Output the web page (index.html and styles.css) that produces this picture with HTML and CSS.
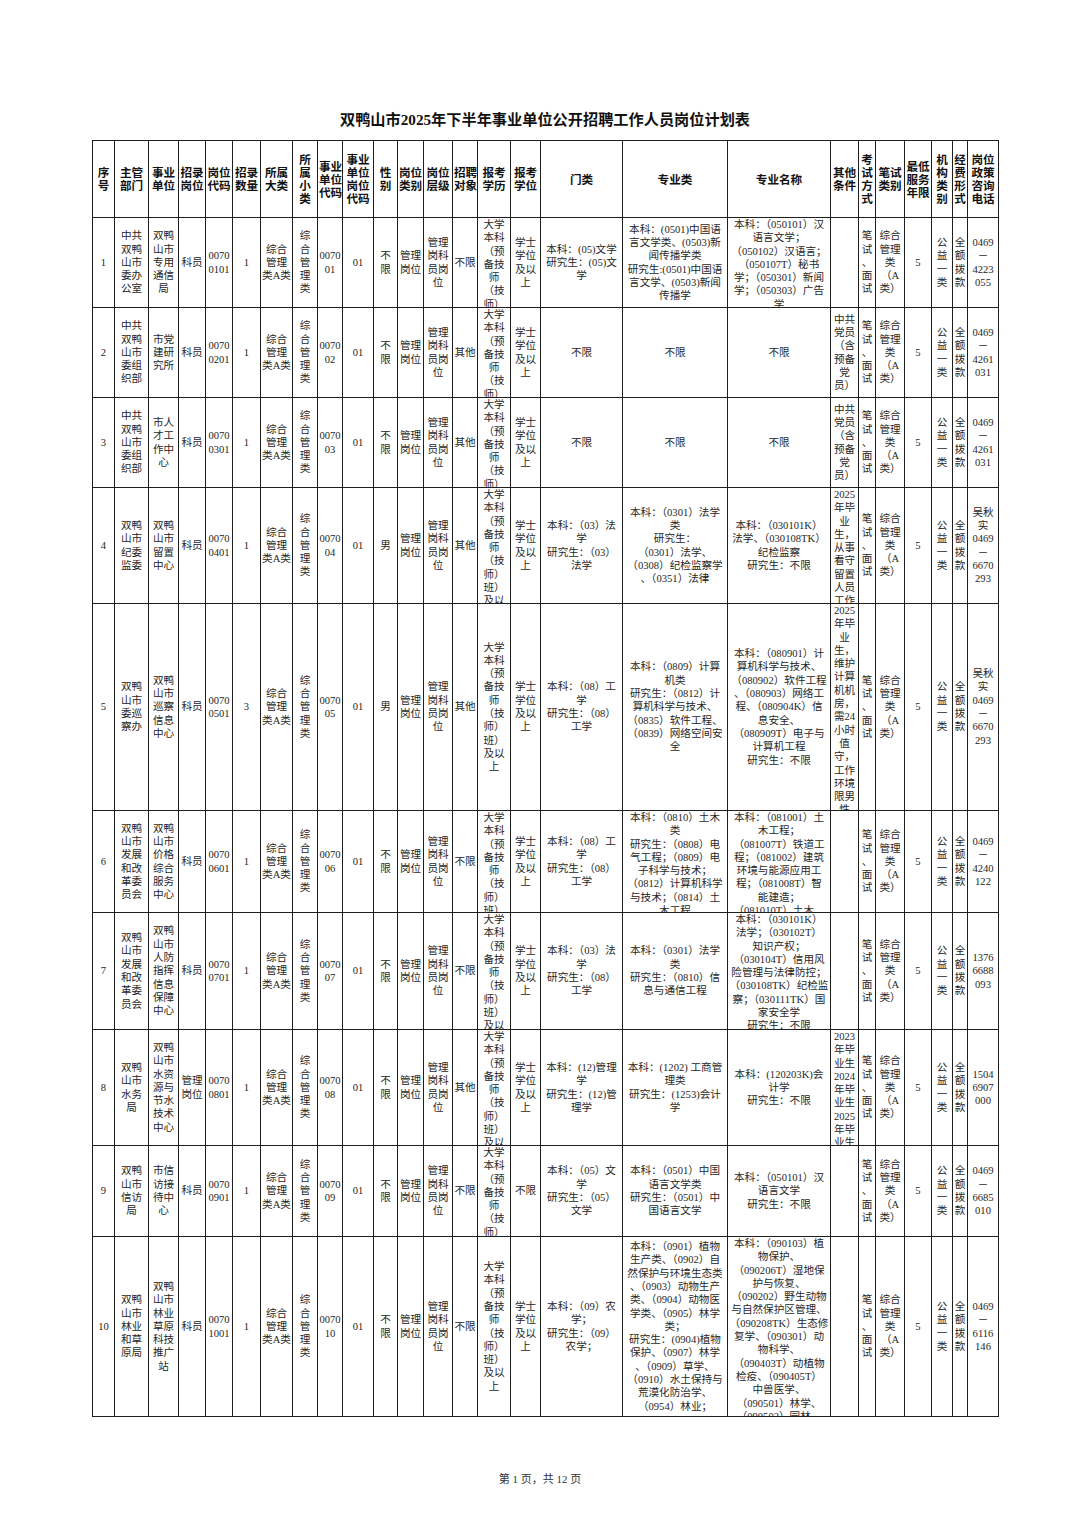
FILE: index.html
```html
<!DOCTYPE html>
<html lang="zh-CN">
<head>
<meta charset="utf-8">
<title>双鸭山市2025年下半年事业单位公开招聘工作人员岗位计划表</title>
<link rel="stylesheet" href="styles.css">
</head>
<body>
<div class="sheet">
<h1 class="title">双鸭山市2025年下半年事业单位公开招聘工作人员岗位计划表</h1>
<table class="plan">
<colgroup>
<col class="c-no"><col class="c-dept"><col class="c-unit"><col class="c-post"><col class="c-code"><col class="c-num"><col class="c-cat"><col class="c-sub"><col class="c-ucode"><col class="c-pcode"><col class="c-sex"><col class="c-ptype"><col class="c-level"><col class="c-target"><col class="c-edu"><col class="c-deg"><col class="c-field"><col class="c-major"><col class="c-mname"><col class="c-other"><col class="c-exam"><col class="c-wtype"><col class="c-years"><col class="c-org"><col class="c-fund"><col class="c-tel">
</colgroup>
<thead>
<tr class="hd">
<th>序<br>号</th><th>主管<br>部门</th><th>事业<br>单位</th><th>招录<br>岗位</th><th>岗位<br>代码</th><th>招录<br>数量</th><th>所属<br>大类</th><th>所<br>属<br>小<br>类</th><th>事业<br>单位<br>代码</th><th>事业<br>单位<br>岗位<br>代码</th><th>性<br>别</th><th>岗位<br>类别</th><th>岗位<br>层级</th><th>招聘<br>对象</th><th>报考<br>学历</th><th>报考<br>学位</th><th>门类</th><th>专业类</th><th>专业名称</th><th>其他<br>条件</th><th>考<br>试<br>方<br>式</th><th>笔试<br>类别</th><th>最低<br>服务<br>年限</th><th>机<br>构<br>类<br>别</th><th>经<br>费<br>形<br>式</th><th>岗位<br>政策<br>咨询<br>电话</th>
</tr>
</thead>
<tbody>
<tr class="r1">
<td>1</td><td>中共<br>双鸭<br>山市<br>委办<br>公室</td><td>双鸭<br>山市<br>专用<br>通信<br>局</td><td>科员</td><td>0070<br>0101</td><td>1</td><td>综合<br>管理<br>类A类</td><td>综<br>合<br>管<br>理<br>类</td><td>0070<br>01</td><td>01</td><td>不<br>限</td><td>管理<br>岗位</td><td>管理<br>岗科<br>员岗<br>位</td><td>不限</td>
<td><div class="clip">大学<br>本科<br>（预<br>备技<br>师<br>（技<br>师）</div></td>
<td>学士<br>学位<br>及以<br>上</td>
<td>本科：(05)文学<br>研究生：(05)文<br>学</td>
<td>本科：(0501)中国语<br>言文学类、(0503)新<br>闻传播学类<br>研究生:(0501)中国语<br>言文学、(0503)新闻<br>传播学</td>
<td><div class="clip">本科：（050101）汉<br>语言文学；<br>（050102）汉语言；<br>（050107T）秘书<br>学；（050301）新闻<br>学；（050303）广告<br>学</div></td>
<td></td><td>笔<br>试<br>、<br>面<br>试</td><td>综合<br>管理<br>类<br>（A<br>类）</td><td>5</td><td>公<br>益<br>一<br>类</td><td>全<br>额<br>拨<br>款</td><td>0469<br>－<br>4223<br>055</td>
</tr>
<tr class="r2">
<td>2</td><td>中共<br>双鸭<br>山市<br>委组<br>织部</td><td>市党<br>建研<br>究所</td><td>科员</td><td>0070<br>0201</td><td>1</td><td>综合<br>管理<br>类A类</td><td>综<br>合<br>管<br>理<br>类</td><td>0070<br>02</td><td>01</td><td>不<br>限</td><td>管理<br>岗位</td><td>管理<br>岗科<br>员岗<br>位</td><td>其他</td>
<td><div class="clip">大学<br>本科<br>（预<br>备技<br>师<br>（技<br>师）</div></td>
<td>学士<br>学位<br>及以<br>上</td>
<td>不限</td><td>不限</td><td>不限</td>
<td>中共<br>党员<br>（含<br>预备<br>党<br>员）</td><td>笔<br>试<br>、<br>面<br>试</td><td>综合<br>管理<br>类<br>（A<br>类）</td><td>5</td><td>公<br>益<br>一<br>类</td><td>全<br>额<br>拨<br>款</td><td>0469<br>－<br>4261<br>031</td>
</tr>
<tr class="r3">
<td>3</td><td>中共<br>双鸭<br>山市<br>委组<br>织部</td><td>市人<br>才工<br>作中<br>心</td><td>科员</td><td>0070<br>0301</td><td>1</td><td>综合<br>管理<br>类A类</td><td>综<br>合<br>管<br>理<br>类</td><td>0070<br>03</td><td>01</td><td>不<br>限</td><td>管理<br>岗位</td><td>管理<br>岗科<br>员岗<br>位</td><td>其他</td>
<td><div class="clip">大学<br>本科<br>（预<br>备技<br>师<br>（技<br>师）</div></td>
<td>学士<br>学位<br>及以<br>上</td>
<td>不限</td><td>不限</td><td>不限</td>
<td>中共<br>党员<br>（含<br>预备<br>党<br>员）</td><td>笔<br>试<br>、<br>面<br>试</td><td>综合<br>管理<br>类<br>（A<br>类）</td><td>5</td><td>公<br>益<br>一<br>类</td><td>全<br>额<br>拨<br>款</td><td>0469<br>－<br>4261<br>031</td>
</tr>
<tr class="r4">
<td>4</td><td>双鸭<br>山市<br>纪委<br>监委</td><td>双鸭<br>山市<br>留置<br>中心</td><td>科员</td><td>0070<br>0401</td><td>1</td><td>综合<br>管理<br>类A类</td><td>综<br>合<br>管<br>理<br>类</td><td>0070<br>04</td><td>01</td><td>男</td><td>管理<br>岗位</td><td>管理<br>岗科<br>员岗<br>位</td><td>其他</td>
<td><div class="clip">大学<br>本科<br>（预<br>备技<br>师<br>（技<br>师）<br>班）<br>及以</div></td>
<td>学士<br>学位<br>及以<br>上</td>
<td>本科：（03）法<br>学<br>研究生：（03）<br>法学</td>
<td>本科：（0301）法学<br>类<br>研究生：<br>（0301）法学、<br>（0308）纪检监察学<br>、（0351）法律</td>
<td>本科：（030101K）<br>法学、（030108TK）<br>纪检监察<br>研究生：不限</td>
<td><div class="clip">2025<br>年毕<br>业<br>生，<br>从事<br>看守<br>留置<br>人员<br>工作</div></td>
<td>笔<br>试<br>、<br>面<br>试</td><td>综合<br>管理<br>类<br>（A<br>类）</td><td>5</td><td>公<br>益<br>一<br>类</td><td>全<br>额<br>拨<br>款</td><td>吴秋<br>实<br>0469<br>－<br>6670<br>293</td>
</tr>
<tr class="r5">
<td>5</td><td>双鸭<br>山市<br>委巡<br>察办</td><td>双鸭<br>山市<br>巡察<br>信息<br>中心</td><td>科员</td><td>0070<br>0501</td><td>3</td><td>综合<br>管理<br>类A类</td><td>综<br>合<br>管<br>理<br>类</td><td>0070<br>05</td><td>01</td><td>男</td><td>管理<br>岗位</td><td>管理<br>岗科<br>员岗<br>位</td><td>其他</td>
<td>大学<br>本科<br>（预<br>备技<br>师<br>（技<br>师）<br>班）<br>及以<br>上</td>
<td>学士<br>学位<br>及以<br>上</td>
<td>本科：（08）工<br>学<br>研究生：（08）<br>工学</td>
<td>本科：（0809）计算<br>机类<br>研究生：（0812）计<br>算机科学与技术、<br>（0835）软件工程、<br>（0839）网络空间安<br>全</td>
<td>本科：（080901）计<br>算机科学与技术、<br>（080902）软件工程<br>、（080903）网络工<br>程、（080904K）信<br>息安全、<br>（080909T）电子与<br>计算机工程<br>研究生：不限</td>
<td><div class="clip">2025<br>年毕<br>业<br>生，<br>维护<br>计算<br>机机<br>房，<br>需24<br>小时<br>值<br>守，<br>工作<br>环境<br>限男<br>性</div></td>
<td>笔<br>试<br>、<br>面<br>试</td><td>综合<br>管理<br>类<br>（A<br>类）</td><td>5</td><td>公<br>益<br>一<br>类</td><td>全<br>额<br>拨<br>款</td><td>吴秋<br>实<br>0469<br>－<br>6670<br>293</td>
</tr>
<tr class="r6">
<td>6</td><td>双鸭<br>山市<br>发展<br>和改<br>革委<br>员会</td><td>双鸭<br>山市<br>价格<br>综合<br>服务<br>中心</td><td>科员</td><td>0070<br>0601</td><td>1</td><td>综合<br>管理<br>类A类</td><td>综<br>合<br>管<br>理<br>类</td><td>0070<br>06</td><td>01</td><td>不<br>限</td><td>管理<br>岗位</td><td>管理<br>岗科<br>员岗<br>位</td><td>不限</td>
<td><div class="clip">大学<br>本科<br>（预<br>备技<br>师<br>（技<br>师）<br>班）</div></td>
<td>学士<br>学位<br>及以<br>上</td>
<td>本科：（08）工<br>学<br>研究生：（08）<br>工学</td>
<td><div class="clip">本科：（0810）土木<br>类<br>研究生：（0808）电<br>气工程；（0809）电<br>子科学与技术；<br>（0812）计算机科学<br>与技术；（0814）土<br>木工程</div></td>
<td><div class="clip">本科：（081001）土<br>木工程；<br>（081007T）铁道工<br>程；（081002）建筑<br>环境与能源应用工<br>程；（081008T）智<br>能建造；<br>（081010T）土木、</div></td>
<td></td><td>笔<br>试<br>、<br>面<br>试</td><td>综合<br>管理<br>类<br>（A<br>类）</td><td>5</td><td>公<br>益<br>一<br>类</td><td>全<br>额<br>拨<br>款</td><td>0469<br>－<br>4240<br>122</td>
</tr>
<tr class="r7">
<td>7</td><td>双鸭<br>山市<br>发展<br>和改<br>革委<br>员会</td><td>双鸭<br>山市<br>人防<br>指挥<br>信息<br>保障<br>中心</td><td>科员</td><td>0070<br>0701</td><td>1</td><td>综合<br>管理<br>类A类</td><td>综<br>合<br>管<br>理<br>类</td><td>0070<br>07</td><td>01</td><td>不<br>限</td><td>管理<br>岗位</td><td>管理<br>岗科<br>员岗<br>位</td><td>不限</td>
<td><div class="clip">大学<br>本科<br>（预<br>备技<br>师<br>（技<br>师）<br>班）<br>及以</div></td>
<td>学士<br>学位<br>及以<br>上</td>
<td>本科：（03）法<br>学<br>研究生：（08）<br>工学</td>
<td>本科：（0301）法学<br>类<br>研究生：（0810）信<br>息与通信工程</td>
<td><div class="clip">本科：（030101K）<br>法学；（030102T）<br>知识产权；<br>（030104T）信用风<br>险管理与法律防控；<br>（030108TK）纪检监<br>察；（030111TK）国<br>家安全学<br>研究生：不限</div></td>
<td></td><td>笔<br>试<br>、<br>面<br>试</td><td>综合<br>管理<br>类<br>（A<br>类）</td><td>5</td><td>公<br>益<br>一<br>类</td><td>全<br>额<br>拨<br>款</td><td>1376<br>6688<br>093</td>
</tr>
<tr class="r8">
<td>8</td><td>双鸭<br>山市<br>水务<br>局</td><td>双鸭<br>山市<br>水资<br>源与<br>节水<br>技术<br>中心</td><td>管理<br>岗位</td><td>0070<br>0801</td><td>1</td><td>综合<br>管理<br>类A类</td><td>综<br>合<br>管<br>理<br>类</td><td>0070<br>08</td><td>01</td><td>不<br>限</td><td>管理<br>岗位</td><td>管理<br>岗科<br>员岗<br>位</td><td>其他</td>
<td><div class="clip">大学<br>本科<br>（预<br>备技<br>师<br>（技<br>师）<br>班）<br>及以</div></td>
<td>学士<br>学位<br>及以<br>上</td>
<td>本科：(12)管理<br>学<br>研究生：(12)管<br>理学</td>
<td>本科：(1202) 工商管<br>理类<br>研究生：(1253)会计<br>学</td>
<td>本科：(120203K)会<br>计学<br>研究生：不限</td>
<td><div class="clip">2023<br>年毕<br>业生<br>2024<br>年毕<br>业生<br>2025<br>年毕<br>业生</div></td>
<td>笔<br>试<br>、<br>面<br>试</td><td>综合<br>管理<br>类<br>（A<br>类）</td><td>5</td><td>公<br>益<br>一<br>类</td><td>全<br>额<br>拨<br>款</td><td>1504<br>6907<br>000</td>
</tr>
<tr class="r9">
<td>9</td><td>双鸭<br>山市<br>信访<br>局</td><td>市信<br>访接<br>待中<br>心</td><td>科员</td><td>0070<br>0901</td><td>1</td><td>综合<br>管理<br>类A类</td><td>综<br>合<br>管<br>理<br>类</td><td>0070<br>09</td><td>01</td><td>不<br>限</td><td>管理<br>岗位</td><td>管理<br>岗科<br>员岗<br>位</td><td>不限</td>
<td><div class="clip">大学<br>本科<br>（预<br>备技<br>师<br>（技<br>师）</div></td>
<td>不限</td>
<td>本科：（05）文<br>学<br>研究生：（05）<br>文学</td>
<td>本科：（0501）中国<br>语言文学类<br>研究生：（0501）中<br>国语言文学</td>
<td>本科：（050101）汉<br>语言文学<br>研究生：不限</td>
<td></td><td>笔<br>试<br>、<br>面<br>试</td><td>综合<br>管理<br>类<br>（A<br>类）</td><td>5</td><td>公<br>益<br>一<br>类</td><td>全<br>额<br>拨<br>款</td><td>0469<br>－<br>6685<br>010</td>
</tr>
<tr class="r10">
<td>10</td><td>双鸭<br>山市<br>林业<br>和草<br>原局</td><td>双鸭<br>山市<br>林业<br>草原<br>科技<br>推广<br>站</td><td>科员</td><td>0070<br>1001</td><td>1</td><td>综合<br>管理<br>类A类</td><td>综<br>合<br>管<br>理<br>类</td><td>0070<br>10</td><td>01</td><td>不<br>限</td><td>管理<br>岗位</td><td>管理<br>岗科<br>员岗<br>位</td><td>不限</td>
<td>大学<br>本科<br>（预<br>备技<br>师<br>（技<br>师）<br>班）<br>及以<br>上</td>
<td>学士<br>学位<br>及以<br>上</td>
<td>本科：（09）农<br>学；<br>研究生：（09）<br>农学；</td>
<td><div class="clip">本科：（0901）植物<br>生产类、（0902）自<br>然保护与环境生态类<br>、（0903）动物生产<br>类、（0904）动物医<br>学类、（0905）林学<br>类；<br>研究生：(0904)植物<br>保护、（0907）林学<br>、（0909）草学、<br>（0910）水土保持与<br>荒漠化防治学、<br>（0954）林业；</div></td>
<td><div class="clip">本科：（090103）植<br>物保护、<br>（090206T）湿地保<br>护与恢复、<br>（090202）野生动物<br>与自然保护区管理、<br>（090208TK）生态修<br>复学、（090301）动<br>物科学、<br>（090403T）动植物<br>检疫、（090405T）<br>中兽医学、<br>（090501）林学、<br>（090502）园林、</div></td>
<td></td><td>笔<br>试<br>、<br>面<br>试</td><td>综合<br>管理<br>类<br>（A<br>类）</td><td>5</td><td>公<br>益<br>一<br>类</td><td>全<br>额<br>拨<br>款</td><td>0469<br>－<br>6116<br>146</td>
</tr>
</tbody>
</table>
</div>
<p class="foot">第 1 页，共 12 页</p>
</body>
</html>
```

FILE: styles.css
```css
* { box-sizing: border-box; }
html, body { margin: 0; padding: 0; background: #fff; }
body {
  width: 1080px;
  height: 1526px;
  overflow: hidden;
  font-family: "Liberation Serif", "Noto Sans CJK SC", serif;
  color: #262626;
}
.sheet {
  width: 906px;
  margin-left: 92px;
  padding-top: 110px;
}
.title {
  margin: 0;
  height: 30px;
  line-height: 20px;
  font-size: 15.2px;
  font-weight: 700;
  text-align: center;
  color: #111;
}
.plan {
  border-collapse: collapse;
  table-layout: fixed;
  width: 906px;
  font-size: 10.6px;
  line-height: 13.3px;
}
.plan th,
.plan td {
  border: 1px solid #1e1e1e;
  padding: 0 1px;
  height: var(--h);
  text-align: center;
  vertical-align: middle;
  white-space: nowrap;
  overflow: hidden;
}
.plan th {
  font-family: "Noto Sans CJK SC", sans-serif;
  font-weight: 700;
  font-size: 11.6px;
  line-height: 13px;
  color: #111;
}
.clip {
  max-height: calc(var(--h) - 1px);
  overflow: hidden;
}

.hd { --h: 77px; }
.r1 { --h: 90px; }
.r2 { --h: 90px; }
.r3 { --h: 90px; }
.r4 { --h: 116px; }
.r5 { --h: 207px; }
.r6 { --h: 102px; }
.r7 { --h: 117px; }
.r8 { --h: 116px; }
.r9 { --h: 91px; }
.r10 { --h: 180px; }

.c-no { width: 22px; }
.c-dept { width: 34px; }
.c-unit { width: 30px; }
.c-post { width: 27px; }
.c-code { width: 27px; }
.c-num { width: 28px; }
.c-cat { width: 32px; }
.c-sub { width: 25px; }
.c-ucode { width: 25px; }
.c-pcode { width: 31px; }
.c-sex { width: 24px; }
.c-ptype { width: 26px; }
.c-level { width: 29px; }
.c-target { width: 25px; }
.c-edu { width: 33px; }
.c-deg { width: 30px; }
.c-field { width: 82px; }
.c-major { width: 105px; }
.c-mname { width: 103px; }
.c-other { width: 28px; }
.c-exam { width: 17px; }
.c-wtype { width: 29px; }
.c-years { width: 27px; }
.c-org { width: 21px; }
.c-fund { width: 15px; }
.c-tel { width: 31px; }

.foot {
  margin: 55px 0 0;
  line-height: 14px;
  font-size: 11px;
  text-align: center;
  color: #333;
}
```
